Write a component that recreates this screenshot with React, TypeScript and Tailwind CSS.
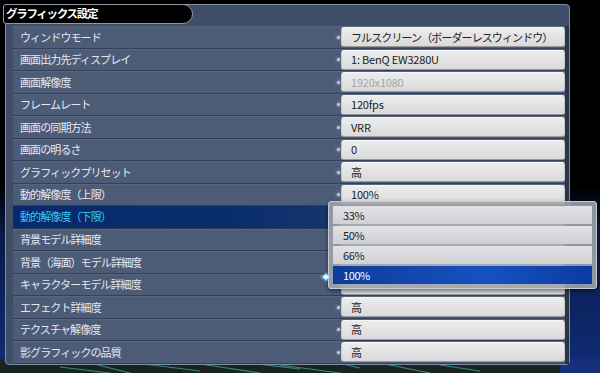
import React from 'react';

const rows = [
  { label: 'ウィンドウモード', value: 'フルスクリーン（ボーダーレスウィンドウ）' },
  { label: '画面出力先ディスプレイ', value: '1: BenQ EW3280U' },
  { label: '画面解像度', value: '1920x1080', disabled: true },
  { label: 'フレームレート', value: '120fps' },
  { label: '画面の同期方法', value: 'VRR' },
  { label: '画面の明るさ', value: '0' },
  { label: 'グラフィックプリセット', value: '高' },
  { label: '動的解像度（上限）', value: '100%' },
  // the next four values sit under the open list
  { label: '動的解像度（下限）', value: '', active: true },
  { label: '背景モデル詳細度', value: '' },
  { label: '背景（海面）モデル詳細度', value: '' },
  { label: 'キャラクターモデル詳細度', value: '' },
  { label: 'エフェクト詳細度', value: '高' },
  { label: 'テクスチャ解像度', value: '高' },
  { label: '影グラフィックの品質', value: '高' },
];

const options = ['33%', '50%', '66%', '100%'];

const isLatin = (s: string) => /^[\x00-\x7f]*$/.test(s);

const SettingRow = ({ label, value, disabled, active }: { label: string; value: string; disabled?: boolean; active?: boolean }) => (
  <div className="flex h-[22.5px] items-stretch">
    <div
      className={
        active
          ? 'flex flex-1 items-center bg-[linear-gradient(90deg,#062a6e,#0a2d6c_70%,#17366e)] pl-[7px] text-[#3cc8f2] border-b border-[#2f3b52]'
          : 'flex flex-1 items-center bg-[#4c5c77] pl-[7px] text-[#e4e8ef] border-b border-[#33405a] border-t border-t-[#56667f]'
      }
    >
      <span className="tracking-[-0.9px]">{label}</span>
    </div>
    <div className="flex w-[228px] items-center bg-[#4c5c77] border-b border-[#33405a] border-t border-t-[#56667f]">
      <div className="h-[3px] w-[3px] rounded-full bg-white/70 shadow-[0_0_3px_#cfe4ff]" />
      <div className="ml-px flex h-[20px] flex-1 items-center rounded-[3px] border border-t-[#f6f6f6] border-x-[#c8c8c8] border-b-[#9a9a9a] bg-[linear-gradient(180deg,#ececec,#dadada)] pl-[9px]">
        {value && (
          <span
            className={
              disabled
                ? 'text-[#a6a6a6] tracking-[-0.2px]'
                : isLatin(value)
                ? 'text-[#222] tracking-[-0.2px]'
                : 'text-[#222] tracking-[-0.9px]'
            }
          >
            {value}
          </span>
        )}
      </div>
    </div>
  </div>
);

export default function App() {
  return (
    <div
      className="relative h-[373px] w-[600px] overflow-hidden bg-[linear-gradient(180deg,#000_0%,#000_50%,#081a46_62%,#0f2d78_100%)] text-[11px] leading-none"
      style={{ fontFamily: '"Noto Sans CJK JP", "Noto Sans", sans-serif' }}
    >
      {/* scene at bottom */}
      <svg className="absolute bottom-0 left-0" width="600" height="14" viewBox="0 0 600 14">
        <rect width="600" height="14" fill="#1b2222" />
        <path d="M90 4 L130 14 M120 2 L200 12 M200 5 L260 14 M240 3 L300 10 M280 6 L340 14 M330 2 L360 9 M380 4 L430 14 M440 6 L480 12 M60 8 L110 14" stroke="#3fb3a8" strokeWidth="1.2" opacity="0.7" />
        <rect x="560" width="40" height="14" fill="#16307a" />
      </svg>

      <div className="relative ml-[5px] mt-[4px] flex h-[361px] w-[565px] flex-col rounded-[4px] border border-[#7f8ca3] bg-[#3f4d66]">
        {/* header */}
        <div className="flex h-[21px] items-start">
          <div className="-ml-[3px] -mt-px flex h-[20px] w-[190px] items-center rounded-l-[3px] rounded-r-[10px] border border-[#8f99aa] bg-black pl-[2px] text-[11.5px] font-bold text-white tracking-[-1.3px]">
            グラフィックス設定
          </div>
        </div>
        <div className="flex flex-1">
          <div className="flex flex-1 flex-col pl-[7px]">
            {rows.map((r) => (
              <SettingRow key={r.label} {...r} />
            ))}
          </div>
          <div className="w-[4px] bg-[#2c3545]" />
        </div>
      </div>

      {/* dropdown */}
      <div className="absolute left-[328px] top-[201px] h-[88px] w-[269px] rounded-[3px] border border-[#c9ccd2] bg-[#9ea3ab]/90 p-[4px] shadow-[0_2px_4px_rgba(0,0,0,0.5)]">
        <div className="flex h-full flex-col gap-[2px]">
          {options.map((o) => (
            <div
              key={o}
              className={
                o === '100%'
                  ? 'flex flex-1 items-center bg-[linear-gradient(90deg,#0d3c9c,#1652bf_60%,#0b3aa2)] pl-[10px] text-white tracking-[-0.4px]'
                  : 'flex flex-1 items-center bg-[linear-gradient(180deg,#e2e2e4,#cfd0d3)] pl-[10px] text-[#1e1e1e] tracking-[-0.4px]'
              }
            >
              {o}
            </div>
          ))}
        </div>
      </div>

      {/* cursor */}
      <svg className="absolute left-[319px] top-[271px]" width="14" height="12" viewBox="0 0 14 12">
        <path d="M7 1 L13 6 L7 11 L1 6 Z" fill="#6cbcff" opacity="0.6" />
        <path d="M7 3 L10.5 6 L7 9 L3.5 6 Z" fill="#e8f6ff" />
      </svg>
    </div>
  );
}
